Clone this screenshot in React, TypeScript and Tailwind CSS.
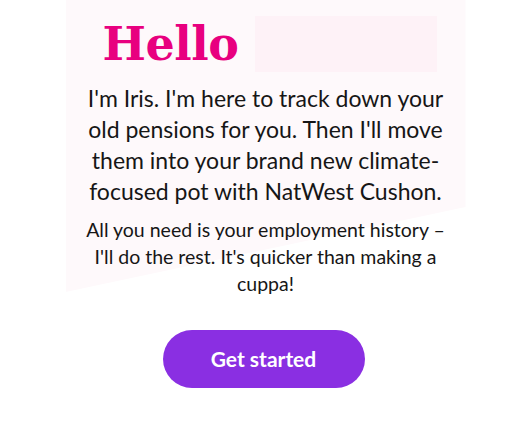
import React from "react";

export default function App() {
  return (
    <div className="min-h-[441px] w-full bg-white flex justify-center font-['Lato','Noto_Sans',sans-serif] text-[#161616]">
      <div className="relative w-[400px]">
        <div className="absolute inset-x-0 top-0 h-[295px] bg-[#fef9fb] [clip-path:polygon(0_0,100%_0,100%_207px,0_292px)]" />
        <div className="relative flex flex-col items-center">
          <div className="flex w-full items-center pt-[16px] pl-[37px]">
            <h1 className="font-['DejaVu_Serif',serif] font-bold text-[46px] leading-[56px] text-[#e8007f] tracking-[-0.5px]">
              Hello
            </h1>
            <div className="ml-[17px] h-[56px] w-[182px] bg-[#fef2f7]" />
          </div>
          <p className="mt-[11px] text-center text-[23px] leading-[31px] whitespace-nowrap">
            I'm Iris. I'm here to track down your
            <br />
            old pensions for you. Then I'll move
            <br />
            them into your brand new climate-
            <br />
            focused pot with NatWest Cushon.
          </p>
          <p className="mt-[9px] text-center text-[19.5px] leading-[27px] whitespace-nowrap">
            All you need is your employment history –
            <br />
            I'll do the rest. It's quicker than making a
            <br />
            cuppa!
          </p>
          <button className="mt-[33px] mr-[4px] h-[58px] w-[202px] rounded-full bg-[#8a2fe2] text-white text-[21px] font-bold">
            Get started
          </button>
        </div>
      </div>
    </div>
  );
}
